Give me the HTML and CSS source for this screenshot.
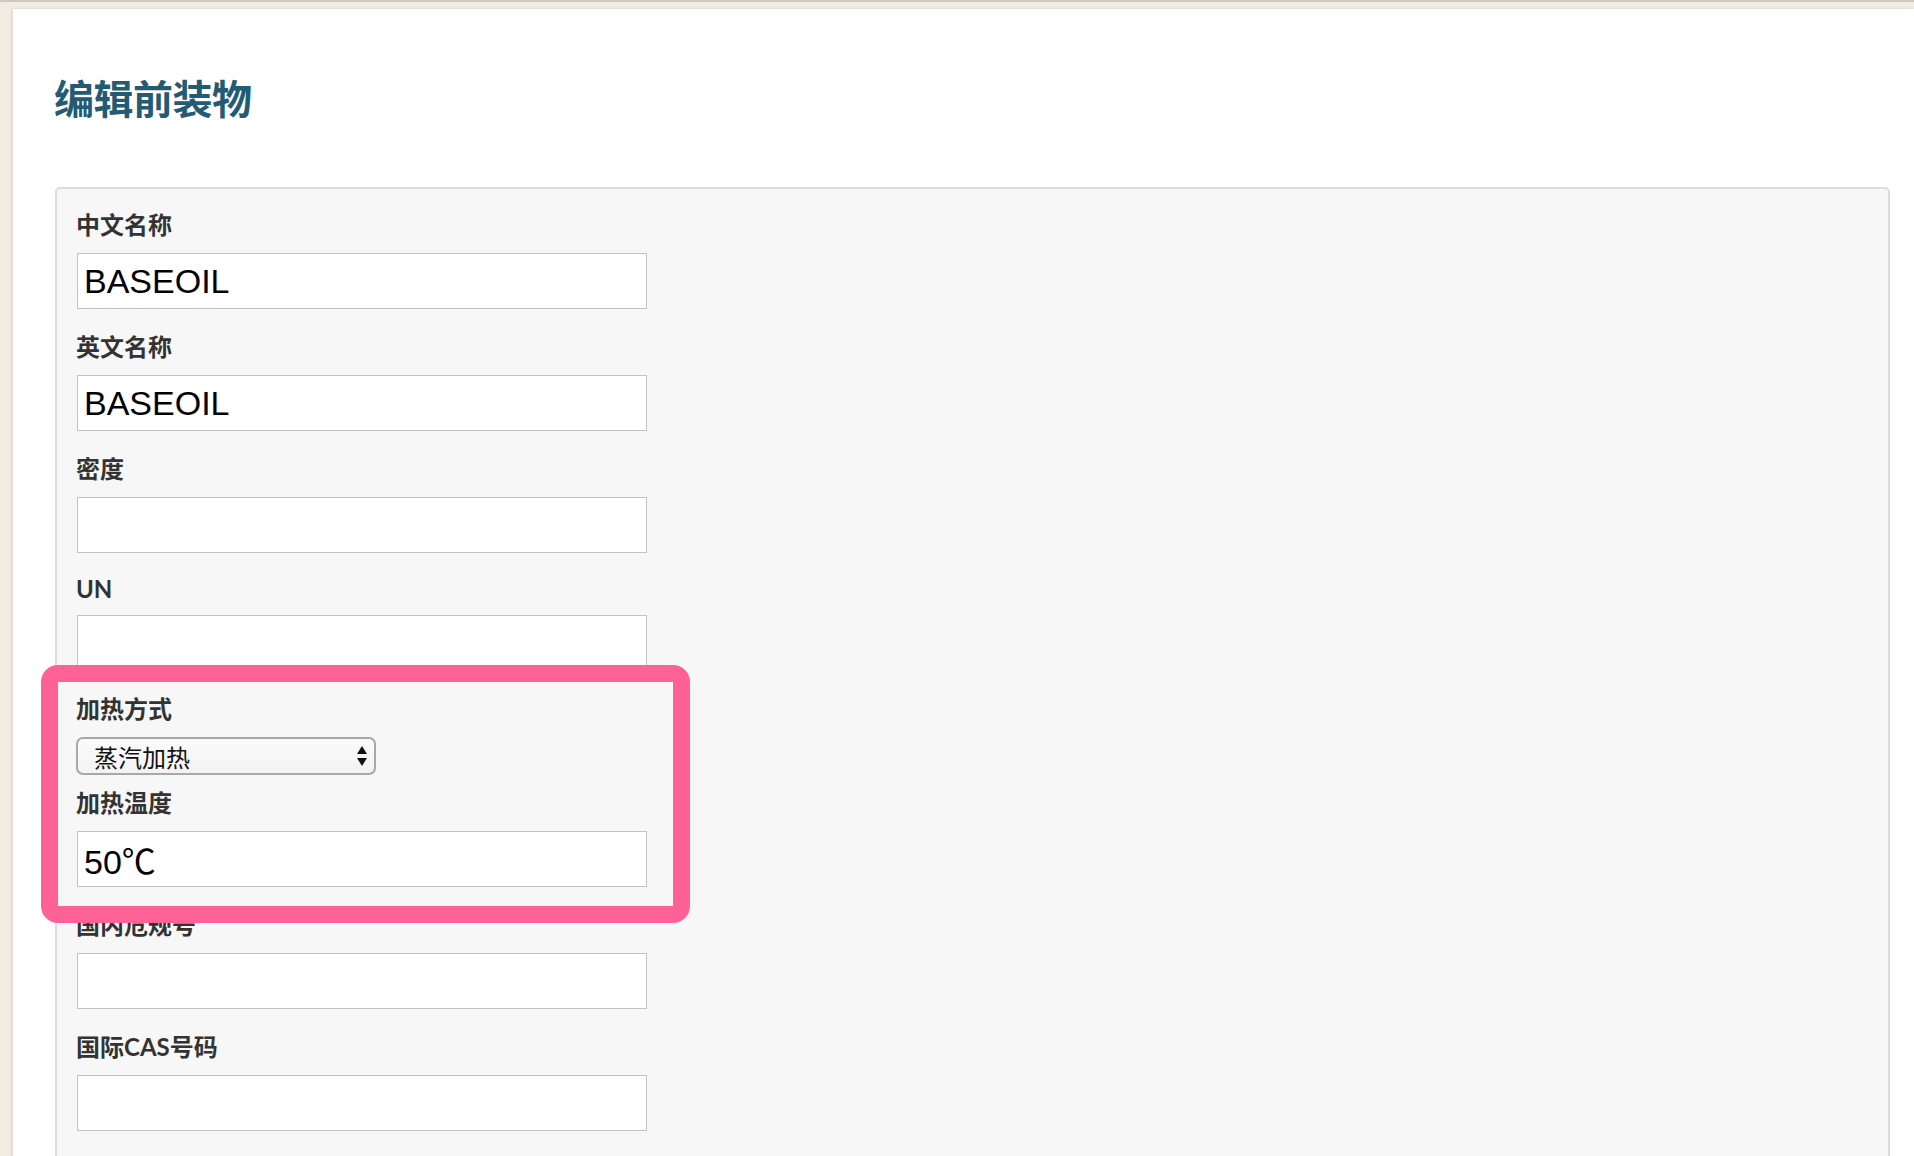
FILE: index.html
```html
<!DOCTYPE html>
<html lang="zh-CN">
<head>
<meta charset="utf-8">
<title>编辑前装物</title>
<link rel="stylesheet" href="styles.css">
</head>
<body>
<div class="card">
  <h1 class="title">编辑前装物</h1>
  <form class="panel">
    <label class="label">中文名称</label>
    <input class="field" type="text" value="BASEOIL">
    <label class="label">英文名称</label>
    <input class="field" type="text" value="BASEOIL">
    <label class="label">密度</label>
    <input class="field" type="text" value="">
    <label class="label label-latin">UN</label>
    <input class="field" type="text" value="">
    <label class="label">加热方式</label>
    <div class="select-wrap">
      <select class="select">
        <option>蒸汽加热</option>
      </select>
      <svg class="select-arrows" width="12" height="22" viewBox="0 0 12 22">
        <path d="M6 1 L11 9 L1 9 Z" fill="#111"/>
        <path d="M1 13 L11 13 L6 21 Z" fill="#111"/>
      </svg>
    </div>
    <label class="label">加热温度</label>
    <input class="field" type="text" value="50℃">
    <label class="label">国内危规号</label>
    <input class="field" type="text" value="">
    <label class="label">国际CAS号码</label>
    <input class="field" type="text" value="">
  </form>
</div>
<div class="highlight"></div>
</body>
</html>
```

FILE: styles.css
```css
html {
  background: #f2ece3;
}
body {
  margin: 0;
  padding: 7px 0 0 13px;
  border-top: 2px solid #cdc8c0;
  background: #f2ece3;
  font-family: "Noto Sans CJK SC", sans-serif;
  position: relative;
}
.card {
  background: #ffffff;
  box-shadow: -1px 0 3px rgba(0, 0, 0, 0.12);
  padding: 64px 24px 0 42px;
  min-height: 1200px;
  box-sizing: border-box;
}
.title {
  margin: 0 0 66px 0;
  font-family: "Noto Sans CJK SC", sans-serif;
  font-size: 40px;
  line-height: 48px;
  font-weight: 700;
  color: #245b74;
  letter-spacing: -0.5px;
  margin-left: -1px;
}
.panel {
  display: flex;
  flex-direction: column;
  align-items: flex-start;
  background: #f7f7f7;
  border: 2px solid #dcdcdc;
  border-radius: 5px;
  padding: 21px 20px 60px 20px;
}
.label {
  display: block;
  font-family: "Lato", "Noto Sans CJK SC", sans-serif;
  font-size: 24px;
  font-weight: 700;
  line-height: 30px;
  color: #333333;
  margin: 0 0 13px -1px;
  letter-spacing: 0;
}
.label-latin {
  line-height: 26px;
}
.field {
  display: block;
  box-sizing: border-box;
  width: 570px;
  height: 56px;
  margin: 0 0 23px 0;
  padding: 0 6px;
  border: 1px solid #c3c3c3;
  border-radius: 0;
  background: #ffffff;
  font-family: "Liberation Sans", "Noto Sans CJK SC", sans-serif;
  font-size: 34px;
  color: #000000;
  outline: none;
}
.select-wrap {
  position: relative;
  margin: 0 0 13px -1px;
}
.select {
  display: block;
  appearance: none;
  -webkit-appearance: none;
  box-sizing: border-box;
  width: 300px;
  height: 38px;
  padding: 0 30px 0 16px;
  border: 2px solid #a8a8a8;
  border-radius: 7px;
  background: linear-gradient(#fbfbfb, #f3f3f3);
  font-family: "Noto Sans CJK SC", sans-serif;
  font-size: 24px;
  color: #111111;
  outline: none;
}
.select-arrows {
  position: absolute;
  right: 8px;
  top: 8px;
  pointer-events: none;
}
.highlight {
  position: absolute;
  left: 41px;
  top: 663px;
  width: 649px;
  height: 258px;
  box-sizing: border-box;
  border: 17px solid #fe6195;
  border-radius: 17px;
  pointer-events: none;
}
```
